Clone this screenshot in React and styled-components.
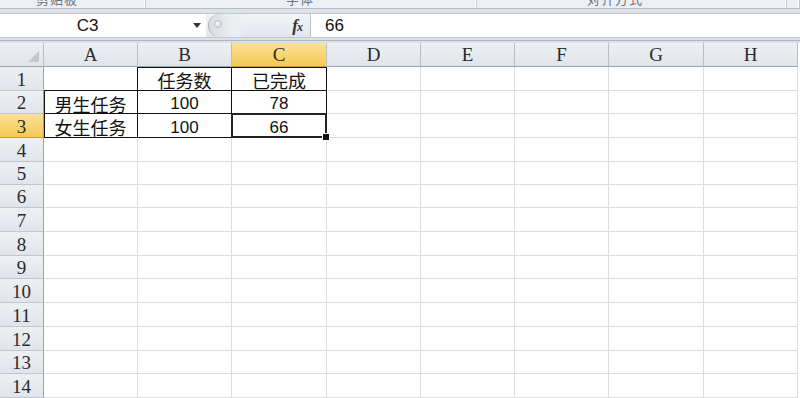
import React from "react";
import styled, { createGlobalStyle, css } from "styled-components";

const GlobalStyle = createGlobalStyle`
  html, body { margin: 0; padding: 0; background: #ffffff; overflow: hidden; }
  * { box-sizing: border-box; }
`;

const Window = styled.div`
  width: 800px;
  height: 398px;
  display: flex;
  flex-direction: column;
  overflow: hidden;
  background: #e3e7ec;
`;

const RibbonStrip = styled.div`
  height: 9px;
  display: flex;
  background: #eceff3;
  border-bottom: 1px solid #b7bec8;
  overflow: hidden;
`;

const RibbonGroup = styled.div`
  width: ${(p) => p.$w}px;
  flex: ${(p) => (p.$w ? "none" : "1")};
  display: flex;
  justify-content: flex-start;
  padding-left: ${(p) => p.$pad || 0}px;
  border-right: 1px solid #c4cad2;
  box-shadow: inset -1px 0 0 #ffffff;
  overflow: hidden;
`;

const RibbonLabel = styled.span`
  font-family: "Noto Sans CJK SC", "Liberation Sans", sans-serif;
  font-size: 13px;
  line-height: 13px;
  color: #6b7280;
  margin-top: -8px;
  letter-spacing: 1px;
`;

const Spacer = styled.div`
  height: ${(p) => p.$h}px;
  flex: none;
  background: #dde2e8;
  border-bottom: ${(p) => (p.$line ? "1px solid #aeb6c0" : "none")};
`;

const FormulaBar = styled.div`
  height: 25px;
  flex: none;
  display: flex;
  background: #ffffff;
  border-top: 1px solid #c2c8d0;
  border-bottom: 1px solid #c2c8d0;
`;

const NameBox = styled.div`
  width: 206px;
  display: flex;
  align-items: center;
  background: #ffffff;
`;

const NameText = styled.span`
  flex: 1;
  text-align: center;
  font-family: "Liberation Sans", sans-serif;
  font-size: 17px;
  color: #111;
  padding-right: 18px;
`;

const DropArrow = styled.span`
  width: 0;
  height: 0;
  margin-right: 5px;
  border-left: 4px solid transparent;
  border-right: 4px solid transparent;
  border-top: 5px solid #333;
`;

const FxArea = styled.div`
  width: 105px;
  display: flex;
  align-items: center;
  justify-content: space-between;
  background: linear-gradient(#f2f4f7, #e2e6eb);
  border-right: 1px solid #b9c0c9;
  padding-right: 8px;
`;

const Splitter = styled.div`
  width: 40px;
  height: 23px;
  margin-left: 2px;
  border-left: 1px solid #a9b1bb;
  border-radius: 12px 0 0 12px;
  background: linear-gradient(90deg, #d8dde3, #eceff2 60%, transparent);
  display: flex;
  align-items: center;
  padding-left: 5px;
`;

const Dimple = styled.span`
  width: 8px;
  height: 8px;
  border-radius: 50%;
  background: radial-gradient(circle at 40% 40%, #ffffff, #c6ccd3);
  border: 1px solid #b8bfc8;
  margin-top: -3px;
`;

const Fx = styled.span`
  font-family: "Liberation Serif", serif;
  font-style: italic;
  font-weight: bold;
  font-size: 17px;
  color: #333;
  letter-spacing: -1px;
  & small {
    font-size: 12px;
  }
`;

const FormulaInput = styled.div`
  flex: 1;
  display: flex;
  align-items: center;
  padding-left: 14px;
  font-family: "Liberation Sans", sans-serif;
  font-size: 17px;
  color: #111;
`;

const Sheet = styled.div`
  flex: none;
  display: grid;
  grid-template-columns: 44px 94px 94px 95px 94px 94px 94px 95px 94px;
  grid-template-rows: 24px ${(p) => p.$rows.map((r) => r + "px").join(" ")};
  background: #ffffff;
`;

const headerBase = css`
  display: flex;
  align-items: center;
  justify-content: center;
  font-family: "Liberation Serif", "DejaVu Serif", serif;
  font-size: 19px;
  color: #2b2b2b;
  border-right: 1px solid #b9bfc7;
  border-bottom: 1px solid #b9bfc7;
  background: ${(p) =>
    p.$sel
      ? "linear-gradient(#fbe199, #f5c952)"
      : "linear-gradient(#edf0f3, #e1e5ea)"};
`;

const Corner = styled.div`
  ${headerBase};
  position: relative;
  border-bottom-color: #9ca5af;
  &::after {
    content: "";
    position: absolute;
    right: 4px;
    bottom: 4px;
    width: 0;
    height: 0;
    border-left: 11px solid transparent;
    border-bottom: 11px solid #c3c8cf;
  }
`;

const ColHeader = styled.div`
  ${headerBase};
  border-bottom-color: ${(p) => (p.$sel ? "#c9a13a" : "#9ca5af")};
  padding-top: 1px;
`;

const RowHeader = styled.div`
  ${headerBase};
  border-right-color: #9ca5af;
  border-bottom-color: ${(p) => (p.$sel ? "#c9a13a" : "#c0c6cd")};
  padding-top: 2px;
`;

const Cell = styled.div`
  position: relative;
  display: flex;
  align-items: center;
  justify-content: center;
  padding-top: 3px;
  font-family: ${(p) =>
    p.$cjk
      ? `"Noto Sans CJK SC", "Liberation Sans", sans-serif`
      : `"Liberation Sans", "Noto Sans CJK SC", sans-serif`};
  font-size: ${(p) => (p.$cjk ? 18 : 17)}px;
  line-height: 1;
  color: #111;
  border-right: 1px solid ${(p) => (p.$br ? "#111" : "#dadcdf")};
  border-bottom: 1px solid ${(p) => (p.$bb ? "#111" : "#dadcdf")};
  box-shadow: ${(p) =>
    [p.$bl ? "inset 1px 0 0 #111" : null, p.$bt ? "inset 0 1px 0 #111" : null]
      .filter(Boolean)
      .join(", ") || "none"};
  ${(p) =>
    p.$active &&
    css`
      &::after {
        content: "";
        position: absolute;
        left: -1px;
        top: -1px;
        right: -1px;
        bottom: -1px;
        border: 2px solid #222;
        pointer-events: none;
      }
      &::before {
        content: "";
        position: absolute;
        right: -4px;
        bottom: -4px;
        width: 6px;
        height: 6px;
        background: #111;
        border: 1px solid #fff;
        z-index: 2;
      }
    `}
`;

const columns = ["A", "B", "C", "D", "E", "F", "G", "H"];
const rowHeights = [24, 23, 24, 24, 23, 23, 24, 24, 23, 24, 24, 24, 23, 24];

const data = {
  B1: { v: "任务数", cjk: true },
  C1: { v: "已完成", cjk: true },
  A2: { v: "男生任务", cjk: true },
  B2: { v: "100" },
  C2: { v: "78" },
  A3: { v: "女生任务", cjk: true },
  B3: { v: "100" },
  C3: { v: "66" },
};

function borderFor(col, row) {
  const inBlock = (c, r) =>
    (c === "A" && (r === 2 || r === 3)) ||
    ((c === "B" || c === "C") && r >= 1 && r <= 3);
  const idx = columns.indexOf(col);
  const right = columns[idx + 1];
  return {
    br: inBlock(col, row) || (right && inBlock(right, row)),
    bb: inBlock(col, row) || inBlock(col, row + 1),
    bl: inBlock(col, row) && idx === 0,
    bt: inBlock(col, row) && row === 1,
  };
}

export default function App() {
  const activeCol = "C";
  const activeRow = 3;
  return (
    <>
      <GlobalStyle />
      <Window>
        <RibbonStrip>
          <RibbonGroup $w={146} $pad={36}>
            <RibbonLabel>剪贴板</RibbonLabel>
          </RibbonGroup>
          <RibbonGroup $w={331} $pad={140}>
            <RibbonLabel>字体</RibbonLabel>
          </RibbonGroup>
          <RibbonGroup $w={310} $pad={110}>
            <RibbonLabel>对齐方式</RibbonLabel>
          </RibbonGroup>
          <RibbonGroup />
        </RibbonStrip>
        <Spacer $h={4} />
        <FormulaBar>
          <NameBox>
            <NameText>C3</NameText>
            <DropArrow />
          </NameBox>
          <FxArea>
            <Splitter>
              <Dimple />
            </Splitter>
            <Fx>
              f<small>x</small>
            </Fx>
          </FxArea>
          <FormulaInput>66</FormulaInput>
        </FormulaBar>
        <Spacer $h={3} $line />
        <Spacer $h={2} />
        <Sheet $rows={rowHeights}>
          <Corner />
          {columns.map((c) => (
            <ColHeader key={c} $sel={c === activeCol}>
              {c}
            </ColHeader>
          ))}
          {rowHeights.map((_, i) => {
            const r = i + 1;
            return (
              <React.Fragment key={r}>
                <RowHeader $sel={r === activeRow}>{r}</RowHeader>
                {columns.map((c) => {
                  const key = c + r;
                  const d = data[key];
                  const b = borderFor(c, r);
                  return (
                    <Cell
                      key={key}
                      $cjk={d && d.cjk}
                      $br={b.br}
                      $bb={b.bb}
                      $bl={b.bl}
                      $bt={b.bt}
                      $active={c === activeCol && r === activeRow}
                    >
                      {d ? d.v : null}
                    </Cell>
                  );
                })}
              </React.Fragment>
            );
          })}
        </Sheet>
      </Window>
    </>
  );
}
